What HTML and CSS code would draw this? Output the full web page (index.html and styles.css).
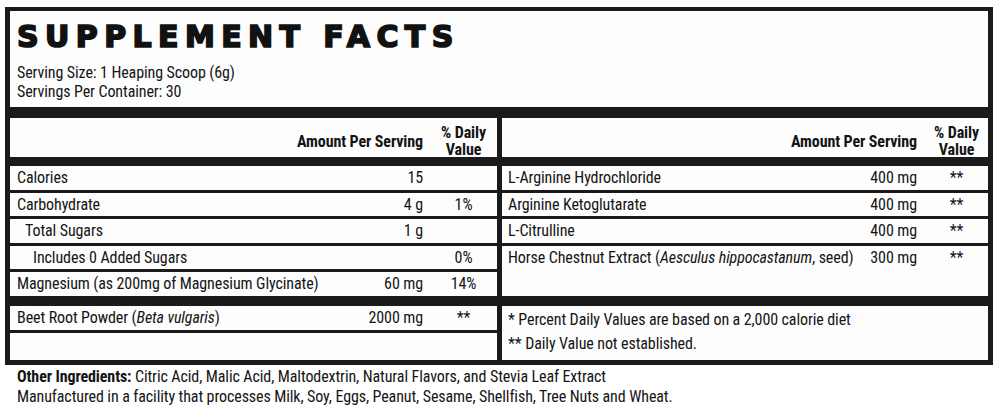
FILE: index.html
```html
<!DOCTYPE html>
<html lang="en">
<head>
<meta charset="utf-8">
<title>Supplement Facts</title>
<link rel="stylesheet" href="styles.css">
</head>
<body>
<div class="label">
  <div class="head">
    <h1 class="title">SUPPLEMENT FACTS</h1>
    <p class="serving">Serving Size: 1 Heaping Scoop (6g)</p>
    <p class="serving">Servings Per Container: 30</p>
  </div>
  <div class="panels">
    <div class="col col-left">
      <div class="thead row-grid">
        <div class="th-amount">Amount Per Serving</div>
        <div class="th-dv">% Daily<br>Value</div>
      </div>
      <div class="rows">
        <div class="row row-grid"><span class="name">Calories</span><span class="amt">15</span><span class="dv"></span></div>
        <div class="row row-grid"><span class="name">Carbohydrate</span><span class="amt">4 g</span><span class="dv">1%</span></div>
        <div class="row row-grid"><span class="name indent1">Total Sugars</span><span class="amt">1 g</span><span class="dv"></span></div>
        <div class="row row-grid"><span class="name indent2">Includes 0 Added Sugars</span><span class="amt"></span><span class="dv">0%</span></div>
        <div class="row row-grid"><span class="name">Magnesium (as 200mg of Magnesium Glycinate)</span><span class="amt">60 mg</span><span class="dv">14%</span></div>
      </div>
      <div class="bottom">
        <div class="row row-grid beet"><span class="name">Beet Root Powder (<i>Beta vulgaris</i>)</span><span class="amt">2000 mg</span><span class="dv">**</span></div>
        <div class="row empty"></div>
      </div>
    </div>
    <div class="col col-right">
      <div class="thead row-grid">
        <div class="th-amount">Amount Per Serving</div>
        <div class="th-dv">% Daily<br>Value</div>
      </div>
      <div class="rows">
        <div class="row row-grid"><span class="name">L-Arginine Hydrochloride</span><span class="amt">400 mg</span><span class="dv">**</span></div>
        <div class="row row-grid"><span class="name">Arginine Ketoglutarate</span><span class="amt">400 mg</span><span class="dv">**</span></div>
        <div class="row row-grid"><span class="name">L-Citrulline</span><span class="amt">400 mg</span><span class="dv">**</span></div>
        <div class="row row-grid tall"><span class="name">Horse Chestnut Extract (<i>Aesculus hippocastanum</i>, seed)</span><span class="amt">300 mg</span><span class="dv">**</span></div>
      </div>
      <div class="bottom">
        <div class="row foot">
          <p>* Percent Daily Values are based on a 2,000 calorie diet</p>
          <p>** Daily Value not established.</p>
        </div>
      </div>
    </div>
  </div>
</div>
<div class="notes">
  <p><b>Other Ingredients:</b> Citric Acid, Malic Acid, Maltodextrin, Natural Flavors, and Stevia Leaf Extract</p>
  <p>Manufactured in a facility that processes Milk, Soy, Eggs, Peanut, Sesame, Shellfish, Tree Nuts and Wheat.</p>
</div>
</body>
</html>
```

FILE: styles.css
```css
* { box-sizing: border-box; }

html, body {
  margin: 0;
  padding: 0;
  background: #ffffff;
}

body {
  font-family: "Roboto", "Liberation Sans", Arial, sans-serif;
  font-stretch: 75%;
  font-size: 16px;
  letter-spacing: -0.1px;
  color: #141414;
}

p { margin: 0; }

.label {
  margin: 7px 0 0 5px;
  width: 988px;
  background: #1b1b1b;
  padding: 4px 5px 5px;
}

.head {
  background: #fdfdfd;
  height: 96px;
  padding: 10.5px 0 0 7px;
}

.title {
  margin: 0;
  font-family: "DejaVu Sans", sans-serif;
  font-stretch: normal;
  font-weight: bold;
  font-size: 30px;
  line-height: 30px;
  letter-spacing: 6.4px;
  color: #111;
  -webkit-text-stroke: 1.7px #111;
}

.serving {
  line-height: 19px;
}

.title + .serving { margin-top: 11.5px; }

.panels {
  margin-top: 11px;
  display: grid;
  grid-template-columns: 487px 486px;
  column-gap: 5px;
  height: 242px;
}

.col {
  display: flex;
  flex-direction: column;
}

.row-grid {
  display: grid;
  align-items: center;
}

.col-left .row-grid { grid-template-columns: 1fr 87px 67px; }
.col-right .row-grid { grid-template-columns: 1fr 62px 63px; }

.thead {
  background: #fdfdfd;
  height: 39px;
  padding-top: 6px;
  font-weight: bold;
  line-height: 17px;
}

.th-amount {
  grid-column: 1 / 3;
  text-align: right;
}

.th-dv { text-align: center; }

.col-left .th-amount { padding-right: 7px; }
.col-right .th-amount { padding-right: 8px; }

.rows {
  margin-top: 9px;
  height: 129.5px;
  display: flex;
  flex-direction: column;
  gap: 3px;
}

.row {
  background: #fdfdfd;
  height: 23.5px;
  line-height: 23.5px;
  flex: none;
}

.row.tall {
  flex: 1;
  align-items: start;
}

.name { padding-left: 7px; white-space: nowrap; }
.col-right .name { padding-left: 6px; }
.indent1 { padding-left: 15px; }
.indent2 { padding-left: 23px; }

.amt { text-align: right; white-space: nowrap; }
.col-left .amt { padding-right: 7px; }
.col-right .amt { padding-right: 8px; }

.dv { text-align: center; white-space: nowrap; }

.bottom {
  margin-top: 10.5px;
  flex: 1;
  display: flex;
  flex-direction: column;
  gap: 3px;
}

.row.beet { height: 24px; line-height: 24px; }
.row.empty { flex: 1; }

.row.foot {
  flex: 1;
  height: auto;
  line-height: 24px;
  padding: 2px 0 0 6px;
}

.notes {
  margin-top: 2px;
  padding-left: 17px;
  line-height: 20px;
}
```
